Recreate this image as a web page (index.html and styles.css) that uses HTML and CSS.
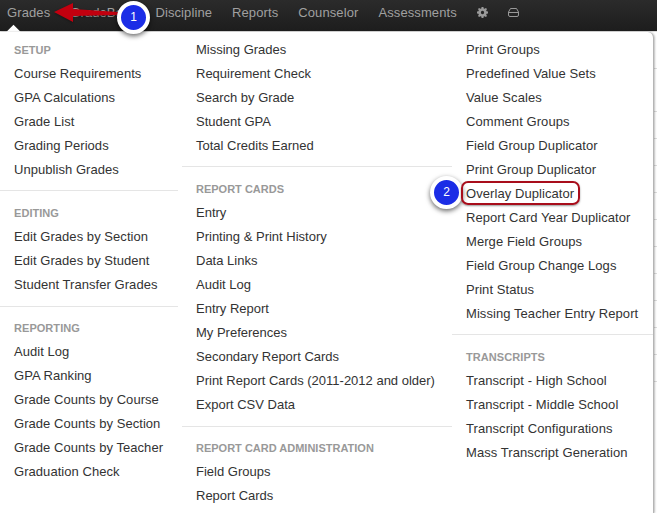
FILE: index.html
```html
<!DOCTYPE html>
<html lang="en">
<head>
<meta charset="utf-8">
<title>Grades menu</title>
<link rel="stylesheet" href="styles.css">
</head>
<body>
<nav class="nav">
  <a class="nav-item">Grades</a>
  <a class="nav-item nav-item-tight">GradeBook</a>
  <a class="nav-item">Discipline</a>
  <a class="nav-item">Reports</a>
  <a class="nav-item">Counselor</a>
  <a class="nav-item">Assessments</a>
  <svg class="nav-icon" width="11" height="11" viewBox="0 0 12 12"><path fill="#9a9a9a" fill-rule="evenodd" d="M5 0h2l.3 1.600 1 .4L9.700 1.100l1.200 1.200-.9 1.400.4 1L12 5v2l-1.600.3-.4 1 .9 1.400-1.200 1.200-1.400-.9-1 .4L7 12H5l-.3-1.600-1-.4-1.400.9-1.200-1.200.9-1.400-.4-1L0 7V5l1.600-.3.4-1-.9-1.400 1.200-1.200 1.400.9 1-.4zM6 4.200a1.800 1.800 0 1 0 0 3.600 1.800 1.800 0 0 0 0-3.600z"/></svg>
  <svg class="nav-icon nav-icon-drive" width="11" height="9" viewBox="0 0 11 9"><path fill="none" stroke="#999" d="M2.500.5h6l2 3.500v3a1.500 1.500 0 0 1-1.500 1.500H2A1.500 1.500 0 0 1 .5 7V4zM.5 4.500h10"/></svg>
</nav>
<div class="caret"></div>
<main class="menu">
  <section class="col col-one">
    <div class="group">
      <h4>SETUP</h4>
      <a>Course Requirements</a><a>GPA Calculations</a><a>Grade List</a><a>Grading Periods</a><a>Unpublish Grades</a>
    </div>
    <div class="group">
      <h4>EDITING</h4>
      <a>Edit Grades by Section</a><a>Edit Grades by Student</a><a>Student Transfer Grades</a>
    </div>
    <div class="group">
      <h4>REPORTING</h4>
      <a>Audit Log</a><a>GPA Ranking</a><a>Grade Counts by Course</a><a>Grade Counts by Section</a><a>Grade Counts by Teacher</a><a>Graduation Check</a>
    </div>
  </section>
  <section class="col col-two">
    <div class="group">
      <a>Missing Grades</a><a>Requirement Check</a><a>Search by Grade</a><a>Student GPA</a><a>Total Credits Earned</a>
    </div>
    <div class="group">
      <h4>REPORT CARDS</h4>
      <a>Entry</a><a>Printing &amp; Print History</a><a>Data Links</a><a>Audit Log</a><a>Entry Report</a><a>My Preferences</a><a>Secondary Report Cards</a><a>Print Report Cards (2011-2012 and older)</a><a>Export CSV Data</a>
    </div>
    <div class="group">
      <h4>REPORT CARD ADMINISTRATION</h4>
      <a>Field Groups</a><a>Report Cards</a>
    </div>
  </section>
  <section class="col col-three">
    <div class="group">
      <a>Print Groups</a><a>Predefined Value Sets</a><a>Value Scales</a><a>Comment Groups</a><a>Field Group Duplicator</a><a>Print Group Duplicator</a><a>Overlay Duplicator</a><a>Report Card Year Duplicator</a><a>Merge Field Groups</a><a>Field Group Change Logs</a><a>Print Status</a><a>Missing Teacher Entry Report</a>
    </div>
    <div class="group">
      <h4>TRANSCRIPTS</h4>
      <a>Transcript - High School</a><a>Transcript - Middle School</a><a>Transcript Configurations</a><a>Mass Transcript Generation</a>
    </div>
  </section>
</main>
<svg class="arrow" width="66" height="24" viewBox="0 0 66 24"><path fill="#c2000f" d="M0 11 19 2v6l45 3v3l-45 1v6z"/></svg>
<div class="badge badge-one">1</div>
<div class="badge badge-two">2</div>
<div class="ring"></div>
</body>
</html>
```
FILE: styles.css
```css
* { box-sizing: border-box; }
html, body { margin: 0; height: 513px; overflow: hidden; }
body {
  position: relative;
  width: 657px;
  font-family: "Liberation Sans", Arial, sans-serif;
  font-size: 13px;
  color: #333;
  background-color: #fff;
  background-image:
    linear-gradient(#ddd, #ddd),
    repeating-linear-gradient(#fff 0 26px, #ddd 26px 27px);
  background-size: 100% 1px, 100% 298px;
  background-position: 0 68px, 0 85px;
  background-repeat: no-repeat;
}
.nav {
  display: flex;
  align-items: center;
  height: 31px;
  padding: 0 0 7px 7px;
  background: linear-gradient(#2b2b2b, #1d1d1d);
  color: #a0a0a0;
  letter-spacing: .1px;
  box-shadow: 0 1px 0 #ddd;
}
.nav-item { margin-right: 20px; }
.nav-item-tight { margin-right: 18.500px; }
.nav-icon { margin: 0 20px 0 0; }
.nav-icon-drive { margin: 0; }
.caret {
  position: absolute;
  left: 8px;
  top: 27px;
  width: 11px;
  height: 11px;
  background: #fff;
  transform: rotate(45deg);
}
.menu {
  display: grid;
  grid-template-columns: 182px 270px 201px;
  width: 654px;
  height: 481px;
  margin-top: 1px;
  background: #fff;
  border-right: 1px solid #b5b5b5;
  border-radius: 0 6px 0 0;
  box-shadow: 1px 0 2px rgba(0, 0, 0, .25);
  padding-top: 6px;
  position: relative;
}
.col { min-width: 0; }
.col-one { width: 178px; letter-spacing: .05px; }
.col-three { letter-spacing: .07px; }
.group + .group { margin-top: 9px; border-top: 1px solid #e5e5e5; padding-top: 9.500px; }
.group:first-child + .group { margin-top: 8px; }
h4 {
  margin: 0;
  padding-left: 14px;
  font-size: 11px;
  line-height: 24px;
  font-weight: 700;
  color: #999;
}
.group a {
  display: block;
  padding-left: 14px;
  line-height: 24px;
  white-space: nowrap;
  color: #333;
}
.arrow { position: absolute; left: 54px; top: 1px; filter: drop-shadow(0 1px 1px rgba(0, 0, 0, .35)); }
.badge {
  position: absolute;
  width: 33px;
  height: 33px;
  border: 4px solid #fff;
  border-radius: 50%;
  background: #1b2de6;
  box-shadow: 0 2px 5px rgba(0, 0, 0, .6);
  color: #fff;
  font-size: 12px;
  line-height: 25px;
  text-align: center;
}
.badge-one { left: 117px; top: 1px; }
.badge-two { left: 430px; top: 176px; }
.ring {
  position: absolute;
  left: 461px;
  top: 181px;
  width: 119px;
  height: 24px;
  border: 2.500px solid #a80d1b;
  border-radius: 7px;
  box-shadow: 0 1px 2px rgba(0, 0, 0, .4);
}
```
